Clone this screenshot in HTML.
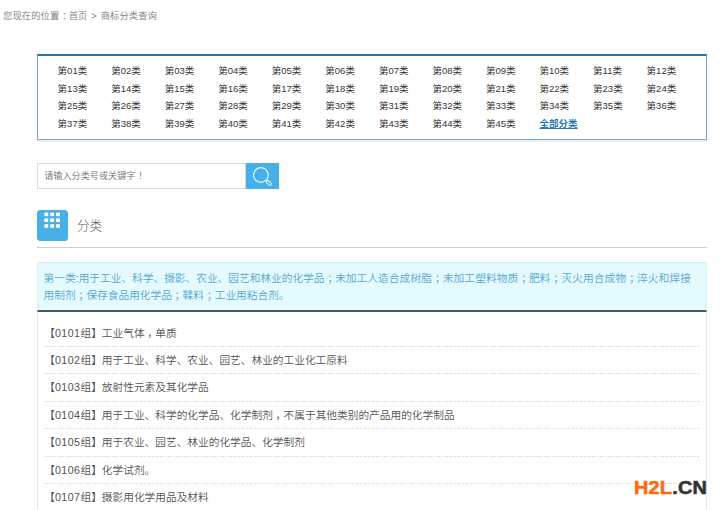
<!DOCTYPE html>
<html lang="zh-CN">
<head>
<meta charset="utf-8">
<title>商标分类查询</title>
<style>
*{box-sizing:border-box;margin:0;padding:0}
html,body{width:720px;height:510px;overflow:hidden;background:#fff}
body{font-family:"Liberation Sans","Noto Sans CJK SC",sans-serif;color:#444;position:relative}
.crumb{position:absolute;left:3px;top:8px;font-size:9.4px;line-height:15px;color:#7c7c7c;white-space:nowrap;word-spacing:1.3px;font-weight:350}
.cats{position:absolute;left:37px;top:54px;width:670px;height:86px;border:1px solid #7aaac8;border-top:2px solid #2c72ab;box-shadow:0 1px 2px rgba(120,160,190,.35);background:#fff}
.cats ul{list-style:none;position:absolute;left:19.6px;top:6.2px;width:648px}
.cats li{float:left;width:53.55px;height:17.45px;line-height:17.45px;font-size:9.5px;color:#363636;white-space:nowrap;font-weight:400}
.cats li.all{color:#2a75b5;font-weight:bold;text-decoration:underline}
.search{position:absolute;left:37px;top:163px;width:242px;height:26px}
.search .inp{position:absolute;left:0;top:0;width:209px;height:26px;border:1px solid #dadada;font-size:9.15px;line-height:24px;padding-left:6.2px;color:#727272;font-weight:350}
.search .btn{position:absolute;left:209px;top:0;width:33px;height:26px;background:#47b0e6}
.ico{position:absolute;left:37px;top:210px;width:30.6px;height:30.6px;background:#47b0e6;border-radius:3.5px}
.h{position:absolute;left:77px;top:216px;font-size:12.6px;line-height:20px;color:#555;font-weight:300}
.hr{position:absolute;left:37px;top:247px;width:670px;height:1px;background:#cfcfcf}
.blue{position:absolute;left:37px;top:262px;width:670px;height:50px;background:#e5fafc;border:1px solid #d3f0f6;border-bottom:2px solid #485861;font-size:10.7px;line-height:17px;color:#52a8d5;font-weight:350;padding:6.5px 4px 0 5.6px;border-radius:3px 3px 0 0}
.list{position:absolute;left:37px;top:312px;width:670px;height:210px;border-left:1px solid #e8e8e8;border-right:1px solid #e8e8e8;background:#fff}
.list ul{list-style:none;margin:0 6px 0 5.7px;padding-top:7.7px}
.list li{padding-left:1.3px;height:27.4px;line-height:27px;font-size:10.7px;color:#535353;font-weight:350;white-space:nowrap;background:repeating-linear-gradient(90deg,#dadada 0,#dadada 1.5px,transparent 1.5px,transparent 2.7px) left bottom/100% 1px no-repeat}
.list li span{display:inline-block;margin-left:-0.8px;letter-spacing:0}
.list li span i{font-style:normal;letter-spacing:.45px;margin-right:-.45px;padding-right:.45px}
.wm{position:absolute;left:634.3px;top:476.3px;font-family:"Liberation Sans",sans-serif;font-weight:bold;font-size:17.5px;line-height:24px;letter-spacing:0.2px;white-space:nowrap;transform-origin:0 0;transform:scaleX(1.135);-webkit-text-stroke:0.55px currentColor}
.wm b{color:#ff6a10;-webkit-text-stroke:0.55px #ff6a10}.wm i{font-style:normal;color:#333;-webkit-text-stroke:0.55px #333}
u{text-decoration:none;position:relative;left:2.7px}
</style>
</head>
<body>
<div class="crumb">您现在的位置<u>：</u>首页 &gt; 商标分类查询</div>
<div class="cats"><ul>
<li>第01类</li><li>第02类</li><li>第03类</li><li>第04类</li><li>第05类</li><li>第06类</li><li>第07类</li><li>第08类</li><li>第09类</li><li>第10类</li><li>第11类</li><li>第12类</li>
<li>第13类</li><li>第14类</li><li>第15类</li><li>第16类</li><li>第17类</li><li>第18类</li><li>第19类</li><li>第20类</li><li>第21类</li><li>第22类</li><li>第23类</li><li>第24类</li>
<li>第25类</li><li>第26类</li><li>第27类</li><li>第28类</li><li>第29类</li><li>第30类</li><li>第31类</li><li>第32类</li><li>第33类</li><li>第34类</li><li>第35类</li><li>第36类</li>
<li>第37类</li><li>第38类</li><li>第39类</li><li>第40类</li><li>第41类</li><li>第42类</li><li>第43类</li><li>第44类</li><li>第45类</li><li class="all">全部分类</li>
</ul></div>
<div class="search"><div class="inp">请输入分类号或关键字<u>！</u></div><div class="btn">
<svg width="33" height="26" viewBox="0 0 33 26"><circle cx="14.9" cy="12" r="7.35" fill="none" stroke="#e4fbff" stroke-width="1.2"/><rect x="-2.9" y="-1.35" width="5.8" height="2.7" rx="1.35" transform="translate(22.85 19.85) rotate(42)" fill="none" stroke="#e4fbff" stroke-width="1"/></svg>
</div></div>
<div class="ico"><svg width="31" height="31" viewBox="0 0 31 31"><g fill="#fff">
<rect x="7.4" y="2.6" width="3.9" height="3.6"/><rect x="13.25" y="2.6" width="3.9" height="3.6"/><rect x="19.1" y="2.6" width="3.9" height="3.6"/>
<rect x="7.4" y="8.4" width="3.9" height="3.6"/><rect x="13.25" y="8.4" width="3.9" height="3.6"/><rect x="19.1" y="8.4" width="3.9" height="3.6"/>
<rect x="7.4" y="14.2" width="3.9" height="3.6"/><rect x="13.25" y="14.2" width="3.9" height="3.6"/><rect x="19.1" y="14.2" width="3.9" height="3.6"/>
</g></svg></div>
<div class="h">分类</div>
<div class="hr"></div>
<div class="blue">第一类:用于工业、科学、摄影、农业、园艺和林业的化学品<u>；</u>未加工<span style="letter-spacing:.1px">人造合成树脂<u>；</u>未加工塑料物质<u>；</u>肥料<u>；</u>灭火用合成物<u>；</u>淬火和焊接</span><br>用制剂<u>；</u>保存食品用化学品<u>；</u>鞣料<u>；</u>工业用粘合剂。</div>
<div class="list"><ul>
<li><span>【<i>0101</i>组】</span>工业气体<u>，</u>单质</li>
<li><span>【<i>0102</i>组】</span>用于工业、科学、农业、园艺、林业的工业化工原料</li>
<li><span>【<i>0103</i>组】</span>放射性元素及其化学品</li>
<li><span>【<i>0104</i>组】</span>用于工业、科学的化学品、化学制剂<u>，</u>不属于其他类别的产品用的化学制品</li>
<li><span>【<i>0105</i>组】</span>用于农业、园艺、林业的化学品、化学制剂</li>
<li><span>【<i>0106</i>组】</span>化学试剂。</li>
<li><span>【<i>0107</i>组】</span>摄影用化学用品及材料</li>
<li><span>【<i>0108</i>组】</span>未加工的人造合成树脂<u>，</u>未加工塑料物质（不包括未加工的天然树脂）</li>
</ul></div>
<div class="wm"><b>H2L</b><i>.CN</i></div>
</body>
</html>
